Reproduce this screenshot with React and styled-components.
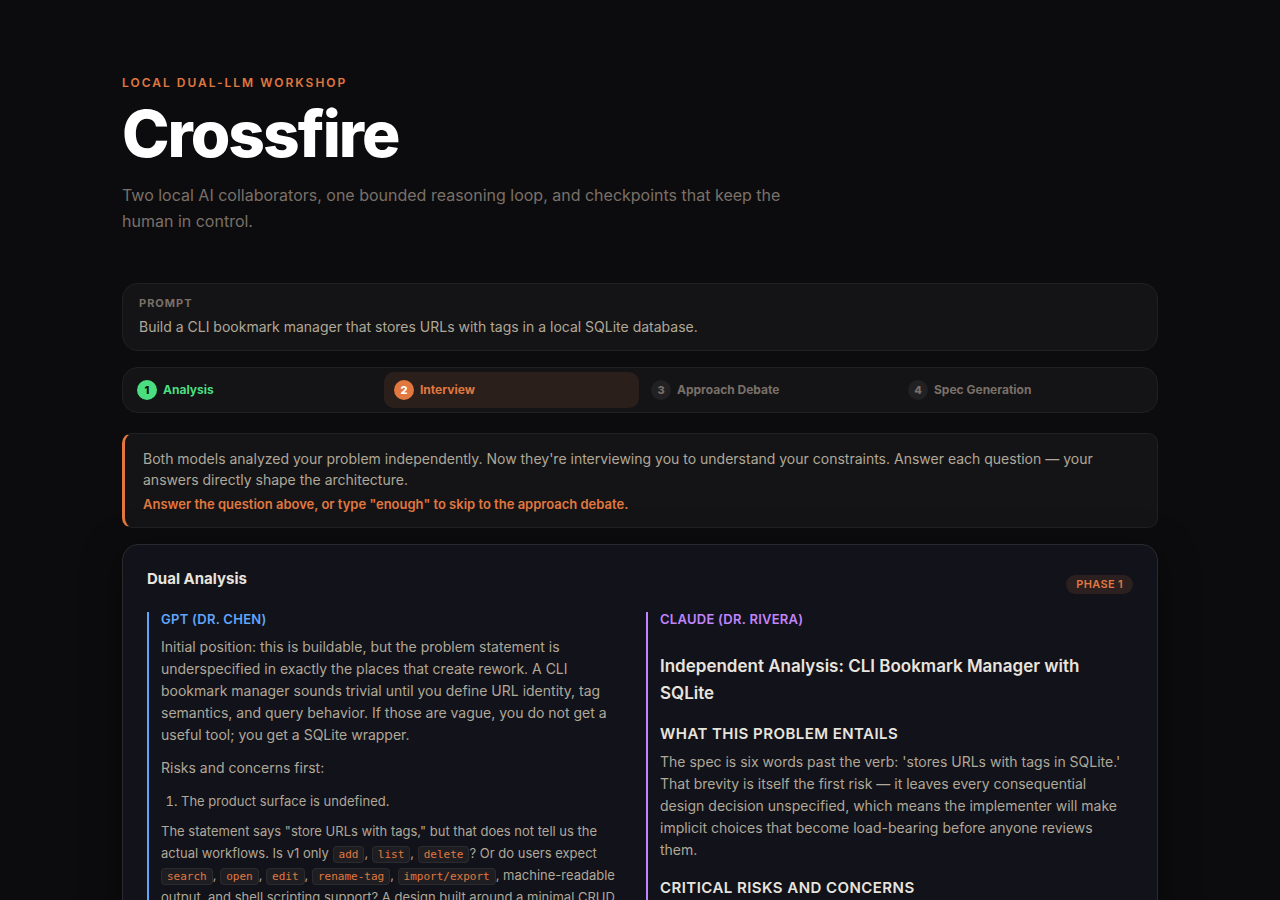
import styled, { createGlobalStyle } from "styled-components";

const steps = [
  { number: 1, label: "Analysis", status: "done" },
  { number: 2, label: "Interview", status: "active" },
  { number: 3, label: "Approach Debate", status: "pending" },
  { number: 4, label: "Spec Generation", status: "pending" },
];

const stepColors = {
  done: { text: "#4ade80", dot: "#4ade80", digit: "#0c0c0e", background: "transparent" },
  active: { text: "#e07840", dot: "#e07840", digit: "#ffffff", background: "#2b1f1b" },
  pending: { text: "#7a7068", dot: "#212123", digit: "#7a7068", background: "transparent" },
};

export default function App() {
  return (
    <>
      <GlobalStyle />
      <Page>
        <Header>
          <Eyebrow>Local dual-LLM workshop</Eyebrow>
          <Title>Crossfire</Title>
          <Tagline>
            Two local AI collaborators, one bounded reasoning loop, and
            checkpoints that keep the human in control.
          </Tagline>
        </Header>

        <PromptCard>
          <PromptLabel>Prompt</PromptLabel>
          <PromptText>
            Build a CLI bookmark manager that stores URLs with tags in a local
            SQLite database.
          </PromptText>
        </PromptCard>

        <Stepper>
          {steps.map((step) => (
            <Step key={step.number} $status={step.status}>
              <StepDot $status={step.status}>{step.number}</StepDot>
              {step.label}
            </Step>
          ))}
        </Stepper>

        <Notice>
          <NoticeText>
            Both models analyzed your problem independently. Now they're
            interviewing you to understand your constraints. Answer each
            question — your answers directly shape the architecture.
          </NoticeText>
          <NoticeAction>
            Answer the question above, or type "enough" to skip to the approach
            debate.
          </NoticeAction>
        </Notice>

        <AnalysisCard>
          <CardHeader>
            <CardTitle>Dual Analysis</CardTitle>
            <Badge>Phase 1</Badge>
          </CardHeader>
          <Columns>
            <Column $color="#60a5fa">
              <ModelName $color="#60a5fa">GPT (Dr. Chen)</ModelName>
              <Paragraph>
                Initial position: this is buildable, but the problem statement
                is underspecified in exactly the places that create rework. A
                CLI bookmark manager sounds trivial until you define URL
                identity, tag semantics, and query behavior. If those are vague,
                you do not get a useful tool; you get a SQLite wrapper.
              </Paragraph>
              <Paragraph>Risks and concerns first:</Paragraph>
              <NumberedList>
                <li>The product surface is undefined.</li>
              </NumberedList>
              <Detail>
                The statement says "store URLs with tags," but that does not
                tell us the actual workflows. Is v1 only <Code>add</Code>,{" "}
                <Code>list</Code>, <Code>delete</Code>? Or do users expect{" "}
                <Code>search</Code>, <Code>open</Code>, <Code>edit</Code>,{" "}
                <Code>rename-tag</Code>, <Code>import/export</Code>,
                machine-readable output, and shell scripting support? A design
                built around a minimal CRUD
              </Detail>
            </Column>
            <Column $color="#c084fc">
              <ModelName $color="#c084fc">Claude (Dr. Rivera)</ModelName>
              <AnalysisTitle>
                Independent Analysis: CLI Bookmark Manager with SQLite
              </AnalysisTitle>
              <SectionTitle>What this problem entails</SectionTitle>
              <Paragraph>
                The spec is six words past the verb: 'stores URLs with tags in
                SQLite.' That brevity is itself the first risk — it leaves every
                consequential design decision unspecified, which means the
                implementer will make implicit choices that become load-bearing
                before anyone reviews them.
              </Paragraph>
              <SectionTitle>Critical risks and concerns</SectionTitle>
            </Column>
          </Columns>
        </AnalysisCard>
      </Page>
    </>
  );
}

const GlobalStyle = createGlobalStyle`
  * {
    box-sizing: border-box;
    margin: 0;
    padding: 0;
  }
  body {
    background: #0c0c0e;
    color: #b0a898;
    font-family: "Inter", sans-serif;
    font-size: 14px;
    line-height: 22px;
  }
`;

const Page = styled.main`
  max-width: 1100px;
  margin: 0 auto;
  padding: 72px 32px;
`;

const Header = styled.header`
  margin-bottom: 49px;
`;

const Eyebrow = styled.p`
  color: #e07840;
  font-size: 12px;
  font-weight: 600;
  letter-spacing: 2px;
  text-transform: uppercase;
`;

const Title = styled.h1`
  margin: 8px 0 16px;
  color: #ffffff;
  font-size: 64px;
  font-weight: 800;
  letter-spacing: -2px;
  line-height: 64px;
`;

const Tagline = styled.p`
  max-width: 680px;
  color: #7a7068;
  font-size: 16px;
  line-height: 26px;
`;

const PromptCard = styled.section`
  margin-bottom: 16px;
  padding: 12px 16px;
  background: #141416;
  border: 1px solid #212123;
  border-radius: 16px;
`;

const PromptLabel = styled.h2`
  margin-bottom: 6px;
  color: #7a7068;
  font-size: 11px;
  font-weight: 700;
  letter-spacing: 1px;
  line-height: 14px;
  text-transform: uppercase;
`;

const PromptText = styled.p`
  font-size: 14px;
`;

const Stepper = styled.ol`
  display: flex;
  gap: 2px;
  margin-bottom: 20px;
  padding: 4px;
  background: #141416;
  border: 1px solid #212123;
  border-radius: 16px;
  list-style: none;
`;

const Step = styled.li`
  flex: 1;
  display: flex;
  align-items: center;
  gap: 6px;
  padding: 8px 10px;
  background: ${({ $status }) => stepColors[$status].background};
  border-radius: 10px;
  color: ${({ $status }) => stepColors[$status].text};
  font-size: 12px;
  font-weight: 700;
  line-height: 20px;
`;

const StepDot = styled.span`
  width: 20px;
  height: 20px;
  background: ${({ $status }) => stepColors[$status].dot};
  border-radius: 50%;
  color: ${({ $status }) => stepColors[$status].digit};
  font-size: 11px;
  font-weight: 800;
  text-align: center;
`;

const Notice = styled.section`
  margin-bottom: 16px;
  padding: 14px 18px 12px;
  background: #141416;
  border: 1px solid #212123;
  border-left: 3px solid #e07840;
  border-radius: 10px;
`;

const NoticeText = styled.p`
  margin-bottom: 4px;
  line-height: 21px;
`;

const NoticeAction = styled.p`
  color: #e07840;
  font-size: 13px;
  font-weight: 600;
  line-height: 21px;
`;

const AnalysisCard = styled.section`
  padding: 24px;
  background: #12121a;
  border: 1px solid #29292e;
  border-radius: 16px;
  box-shadow: 0 8px 40px rgba(0, 0, 0, 0.4);
`;

const CardHeader = styled.header`
  display: flex;
  align-items: flex-end;
  justify-content: space-between;
  margin-bottom: 18px;
`;

const CardTitle = styled.h2`
  padding-bottom: 5px;
  color: #e8e4de;
  font-size: 15px;
  font-weight: 700;
  line-height: 20px;
`;

const Badge = styled.span`
  padding: 2px 10px;
  background: #2b1f20;
  border-radius: 10px;
  color: #e07840;
  font-size: 11px;
  font-weight: 600;
  letter-spacing: 0.03em;
  line-height: 15px;
  text-transform: uppercase;
`;

const Columns = styled.div`
  display: grid;
  grid-template-columns: 1fr 1fr;
  gap: 12px;
`;

const Column = styled.article`
  padding-left: 12px;
  border-left: 2px solid ${({ $color }) => $color};
`;

const ModelName = styled.h3`
  margin-bottom: 9px;
  color: ${({ $color }) => $color};
  font-size: 13px;
  font-weight: 600;
  letter-spacing: 0.02em;
  line-height: 15px;
  text-transform: uppercase;
`;

const Paragraph = styled.p`
  margin-bottom: 11px;
`;

const NumberedList = styled.ol`
  margin-bottom: 8px;
  padding-left: 20px;
  font-size: 13px;
`;

const Detail = styled.p`
  font-size: 13px;
`;

const Code = styled.code`
  padding: 1px 5px;
  background: #1e1e22;
  border: 1px solid #2b2b2f;
  border-radius: 4px;
  color: #e07840;
  font-family: "DejaVu Sans Mono", monospace;
  font-size: 11px;
  line-height: 16px;
`;

const AnalysisTitle = styled.h3`
  margin: 26px 0 16px;
  color: #e8e4de;
  font-size: 17px;
  font-weight: 600;
  line-height: 27px;
`;

const SectionTitle = styled.h4`
  margin: 16px 0 6px;
  color: #e8e4de;
  font-size: 15px;
  font-weight: 600;
  letter-spacing: 0.03em;
  line-height: 22px;
  text-transform: uppercase;
`;
